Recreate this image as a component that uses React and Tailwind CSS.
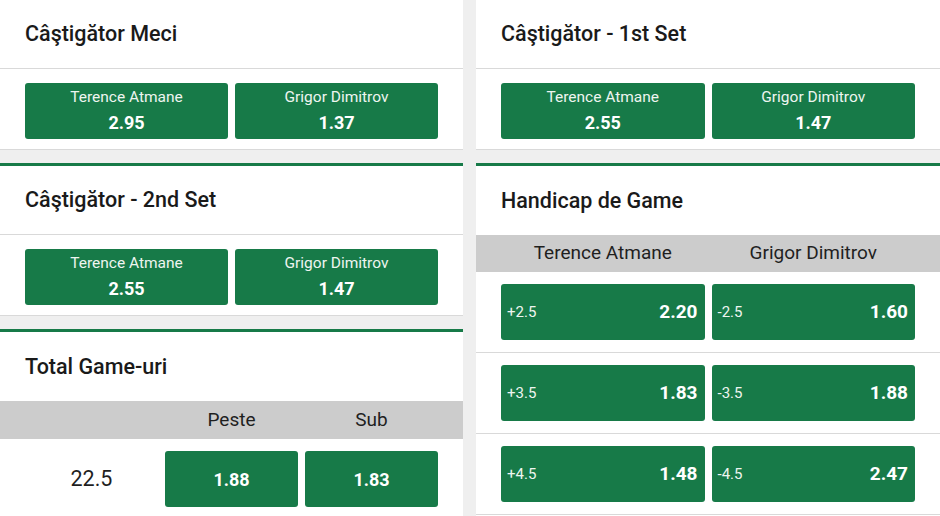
import React from 'react'

const green = 'bg-[#177a48]'

function Title({ children }) {
    return <h2 className="text-[21.5px] font-medium text-[#1a1a1a] leading-none">{children}</h2>
}

function WinnerCard({ title, first, odds }) {
    return (
        <div className={`bg-white border-b border-[#d9d9d9] ${first ? '' : 'border-t-[3px] border-t-[#177a48]'}`}>
            <div className="h-[69px] flex items-center px-[25px] border-b border-[#d9d9d9]">
                <Title>{title}</Title>
            </div>
            <div className="px-[25px] pt-[14px] pb-[10px] grid grid-cols-2 gap-[7px]">
                {odds.map(o => (
                    <button key={o.name} className={`${green} h-[56px] rounded-[3px] flex flex-col items-center justify-center text-white`}>
                        <span className="text-[15.5px] leading-[20px] text-[#eef5f0]">{o.name}</span>
                        <span className="text-[18px] leading-[24px] font-bold mt-[4px]">{o.price}</span>
                    </button>
                ))}
            </div>
        </div>
    )
}

function TotalCard() {
    return (
        <div className="bg-white border-t-[3px] border-[#177a48] flex-1">
            <div className="h-[69px] flex items-center px-[25px]">
                <Title>Total Game-uri</Title>
            </div>
            <div className="bg-[#cccccc] h-[38px] px-[25px] grid grid-cols-3 gap-[7px] items-center text-[19px] text-[#1f1f1f]">
                <span></span>
                <span className="text-center">Peste</span>
                <span className="text-center">Sub</span>
            </div>
            <div className="px-[25px] pt-[12px] pb-[12px] grid grid-cols-3 gap-[7px] items-center">
                <span className="text-center text-[21.5px] text-[#1f1f1f]">22.5</span>
                {['1.88', '1.83'].map(p => (
                    <button key={p} className={`${green} h-[56px] rounded-[3px] text-white text-[18px] font-bold`}>{p}</button>
                ))}
            </div>
        </div>
    )
}

function HandicapCard() {
    const rows = [
        [['+2.5', '2.20'], ['-2.5', '1.60']],
        [['+3.5', '1.83'], ['-3.5', '1.88']],
        [['+4.5', '1.48'], ['-4.5', '2.47']],
    ]
    return (
        <div className="bg-white border-t-[3px] border-[#177a48] flex-1">
            <div className="h-[69px] flex items-center px-[25px]">
                <Title>Handicap de Game</Title>
            </div>
            <div className="bg-[#cccccc] h-[37px] px-[25px] grid grid-cols-2 gap-[7px] items-center text-[19px] text-[#1f1f1f]">
                <span className="text-center">Terence Atmane</span>
                <span className="text-center">Grigor Dimitrov</span>
            </div>
            {rows.map((r, i) => (
                <div key={i} className="px-[25px] pt-[12px] pb-[12px] grid grid-cols-2 gap-[7px] border-b border-[#d9d9d9]">
                    {r.map(([line, price]) => (
                        <button key={line} className={`${green} h-[56px] rounded-[3px] flex items-center justify-between pl-[6px] pr-[7px] text-white`}>
                            <span className="text-[15px] text-[#eef5f0]">{line}</span>
                            <span className="text-[19px] font-bold">{price}</span>
                        </button>
                    ))}
                </div>
            ))}
        </div>
    )
}

export default function App() {
    return (
        <div className="w-[940px] h-[516px] overflow-hidden bg-[#efefef] flex gap-[13px]" style={{ fontFamily: 'Roboto, "Noto Sans", sans-serif' }}>
            <div className="w-[463px] flex flex-col gap-[13px]">
                <WinnerCard first title="Câştigător Meci" odds={[{ name: 'Terence Atmane', price: '2.95' }, { name: 'Grigor Dimitrov', price: '1.37' }]} />
                <WinnerCard title="Câştigător - 2nd Set" odds={[{ name: 'Terence Atmane', price: '2.55' }, { name: 'Grigor Dimitrov', price: '1.47' }]} />
                <TotalCard />
            </div>
            <div className="w-[464px] flex flex-col gap-[13px]">
                <WinnerCard first title="Câştigător - 1st Set" odds={[{ name: 'Terence Atmane', price: '2.55' }, { name: 'Grigor Dimitrov', price: '1.47' }]} />
                <HandicapCard />
            </div>
        </div>
    )
}
